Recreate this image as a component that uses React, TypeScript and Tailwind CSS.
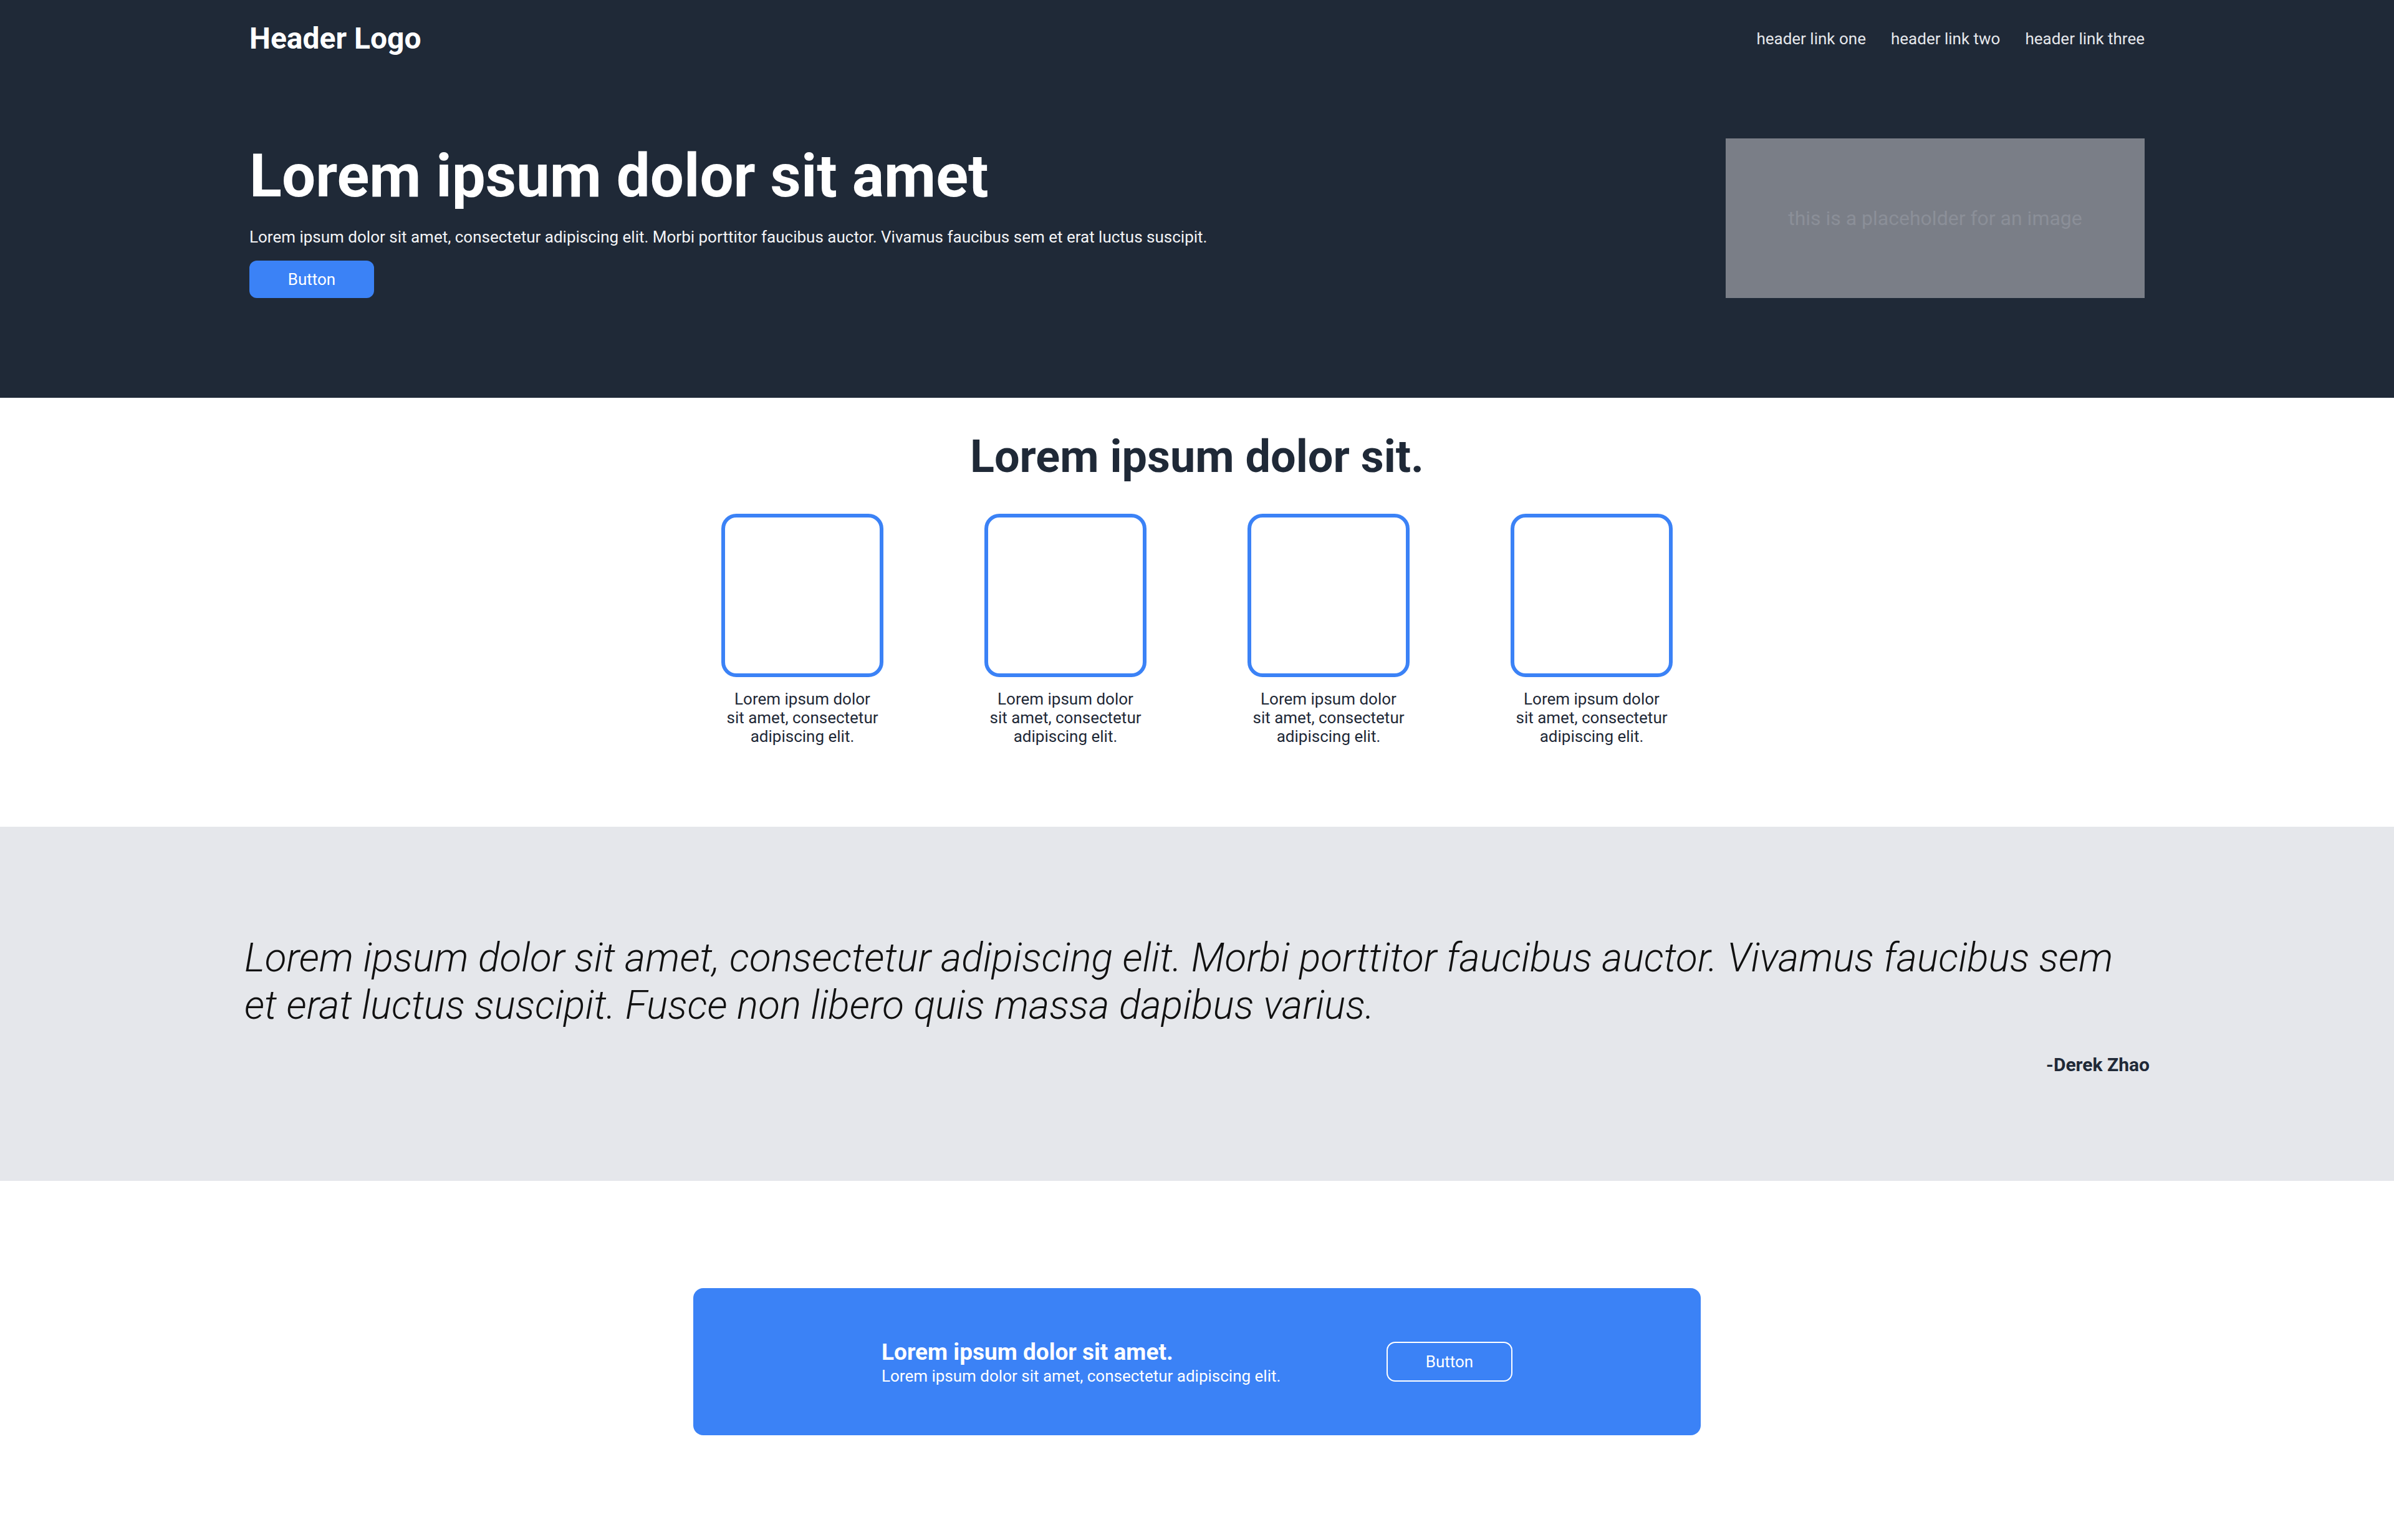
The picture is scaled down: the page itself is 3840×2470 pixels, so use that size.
import React from "react";

const cards = [0, 1, 2, 3];

export default function App() {
  return (
    <div className="min-h-[2470px] bg-white font-['Roboto','Noto_Sans',sans-serif]">
      <section className="h-[638px] bg-[#1f2937]">
        <div className="mx-auto w-[3040px] pt-[30px]">
          <header className="flex h-[64px] items-center justify-between">
            <div className="text-[48px] font-bold leading-[64px] text-white">Header Logo</div>
            <nav className="flex gap-[40px] text-[26px] leading-[40px] text-[#e5e7eb]">
              <a>header link one</a>
              <a>header link two</a>
              <a>header link three</a>
            </nav>
          </header>
          <div className="mt-[128px] flex items-end justify-between">
            <div className="flex flex-col items-start">
              <h1 className="text-[96px] font-bold leading-none text-white">Lorem ipsum dolor sit amet</h1>
              <p className="mt-[34px] text-[26px] leading-[32px] text-[#f3f4f6]">
                Lorem ipsum dolor sit amet, consectetur adipiscing elit. Morbi porttitor faucibus auctor. Vivamus faucibus sem et erat luctus suscipit.
              </p>
              <button className="mt-[22px] flex h-[60px] w-[200px] items-center justify-center rounded-[12px] bg-[#3b82f6] text-[26px] text-white">
                Button
              </button>
            </div>
            <div className="flex h-[256px] w-[672px] items-center justify-center bg-[#7a7e87] text-[32px] text-[#8b8f98]">
              this is a placeholder for an image
            </div>
          </div>
        </div>
      </section>

      <section className="h-[688px] bg-white pt-[55px]">
        <h2 className="text-center text-[72px] font-bold leading-[80px] text-[#1f2937]">Lorem ipsum dolor sit.</h2>
        <div className="mt-[51px] flex justify-center gap-[162px]">
          {cards.map((i) => (
            <div key={i} className="flex w-[260px] flex-col items-center">
              <div className="h-[262px] w-[260px] rounded-[24px] border-[6px] border-[#3b82f6]" />
              <p className="mt-[20px] whitespace-nowrap text-center text-[26px] leading-[30px] text-[#1f2937]">
                Lorem ipsum dolor
                <br />
                sit amet, consectetur
                <br />
                adipiscing elit.
              </p>
            </div>
          ))}
        </div>
      </section>

      <section className="h-[568px] bg-[#e5e7eb] pt-[173px]">
        <div className="mx-auto w-[3056px]">
          <p className="text-[64px] font-light italic leading-[76px] text-[#111111]">
            Lorem ipsum dolor sit amet, consectetur adipiscing elit. Morbi porttitor faucibus auctor. Vivamus faucibus sem
            <br />
            et erat luctus suscipit. Fusce non libero quis massa dapibus varius.
          </p>
          <p className="mt-[37px] text-right text-[30px] font-bold leading-[40px] text-[#1f2937]">-Derek Zhao</p>
        </div>
      </section>

      <section className="pt-[172px] pb-[169px]">
        <div className="mx-auto flex h-[236px] w-[1616px] items-center justify-between rounded-[16px] bg-[#3b82f6] px-[302px]">
          <div className="flex flex-col pt-[2px]">
            <div className="text-[37px] font-bold leading-[44px] text-white">Lorem ipsum dolor sit amet.</div>
            <div className="text-[26px] leading-[32px] text-white">Lorem ipsum dolor sit amet, consectetur adipiscing elit.</div>
          </div>
          <button className="flex h-[64px] w-[202px] items-center justify-center rounded-[14px] border-2 border-white text-[26px] text-white">
            Button
          </button>
        </div>
      </section>
    </div>
  );
}
